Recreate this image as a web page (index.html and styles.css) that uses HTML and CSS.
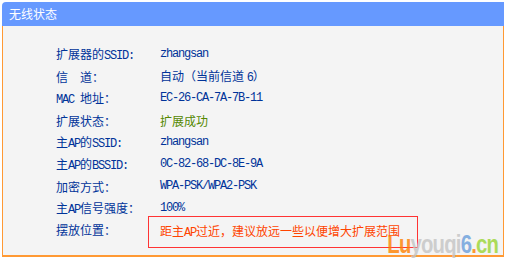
FILE: index.html
```html
<!DOCTYPE html>
<html lang="zh-CN">
<head>
    <meta charset="UTF-8">
    <meta name="viewport" content="width=device-width, initial-scale=1.0">
    <title>无线状态</title>
    <link rel="stylesheet" href="styles.css">
</head>
<body>
    <div class="panel">
        <div class="panel-title">无线状态</div>

        <!-- Status rows -->
        <div class="panel-body">
            <div class="row">
                <span class="label">扩展器的<span class="en">SSID:</span></span>
                <span class="value en">zhangsan</span>
            </div>
            <div class="row">
                <span class="label">信　道：</span>
                <span class="value">自动（当前信道 <span class="en">6</span>）</span>
            </div>
            <div class="row">
                <span class="label"><span class="en">MAC </span>地址：</span>
                <span class="value en">EC-26-CA-7A-7B-11</span>
            </div>
            <div class="row">
                <span class="label">扩展状态：</span>
                <span class="value ok">扩展成功</span>
            </div>
            <div class="row">
                <span class="label">主<span class="en">AP</span>的<span class="en">SSID:</span></span>
                <span class="value en">zhangsan</span>
            </div>
            <div class="row">
                <span class="label">主<span class="en">AP</span>的<span class="en">BSSID:</span></span>
                <span class="value en">0C-82-68-DC-8E-9A</span>
            </div>
            <div class="row">
                <span class="label">加密方式：</span>
                <span class="value en">WPA-PSK/WPA2-PSK</span>
            </div>
            <div class="row">
                <span class="label">主<span class="en">AP</span>信号强度：</span>
                <span class="value en">100%</span>
            </div>
            <div class="row row-last">
                <span class="label">摆放位置：</span>
                <span class="warn">距主<span class="en">AP</span>过近，建议放远一些以便增大扩展范围</span>
            </div>
        </div>

        <div class="watermark"><span class="wm-lu">Lu</span><span class="wm-gray">youqi</span><span class="wm-blue">6</span><span class="wm-lu">.</span><span class="wm-green">cn</span></div>
    </div>
</body>
</html>
```

FILE: styles.css
```css
body {
    margin: 0;
    padding: 2px;
    background-color: #fff;
    font-family: "Noto Sans CJK SC", "Liberation Sans", sans-serif;
    font-size: 12px;
    color: #003399;
}
.panel {
    position: relative;
    width: 502px;
}
.panel-title {
    height: 24px;
    line-height: 24px;
    padding-left: 7px;
    background-color: #6699ff;
    color: #fff;
    border-radius: 4px 0 0 0;
}
.panel-body {
    width: 500px;
    height: 212px;
    padding-top: 17px;
    background-color: #f4f4f4;
    border: 1px solid #ff9933;
    border-top: none;
    border-bottom-width: 2px;
}
.row {
    display: flex;
    align-items: center;
    height: 22px;
    padding-left: 53px;
}
.label {
    width: 104px;
    flex-shrink: 0;
}
.en {
    font-family: "Liberation Mono", monospace;
    letter-spacing: -1.2px;
}
.ok {
    color: #558800;
}
.row-last {
    align-items: flex-start;
}
.row-last .label {
    line-height: 22px;
}
.warn {
    margin-top: -3px;
    margin-left: -12px;
    width: 257px;
    padding: 5px 0 5px 11px;
    line-height: 17px;
    border: 1px solid #ff3333;
    color: #ff4400;
}
.watermark {
    position: absolute;
    right: 6px;
    bottom: 2px;
    font-family: "Liberation Sans", sans-serif;
    font-size: 26px;
    font-weight: bold;
    letter-spacing: -1px;
    line-height: 22px;
    transform: scaleX(0.78);
    transform-origin: right bottom;
    opacity: 0.8;
}
.wm-lu {
    color: #ff8000;
}
.wm-gray {
    color: #c4c4c4;
}
.wm-blue {
    color: #6a9edc;
}
.wm-green {
    color: #99d633;
}
```
